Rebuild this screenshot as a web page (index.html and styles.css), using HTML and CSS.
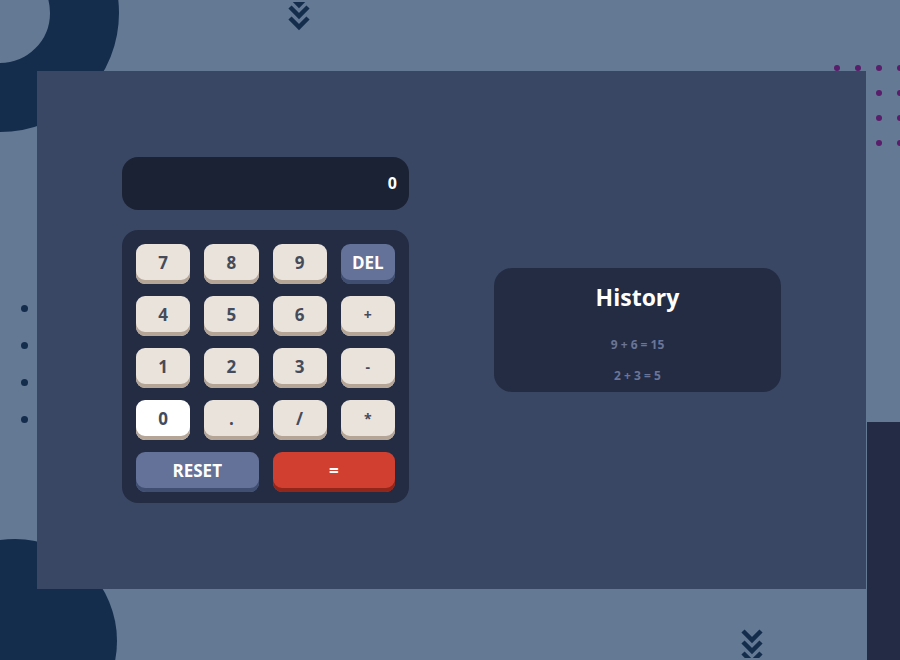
FILE: index.html
```html
<!DOCTYPE html>
<html>
<head>
<meta charset="utf-8">
<link rel="stylesheet" href="styles.css">
</head>
<body>
<div class="stage">
  <div class="ring-top"></div>
  <div class="circle-bottom"></div>
  <svg class="chev chev-top" width="24" height="30" viewBox="0 0 24 30">
    <path d="M3 -6 L12 3 L21 -6" />
    <path d="M3 5 L12 14 L21 5" />
    <path d="M3 16 L12 25 L21 16" />
  </svg>
  <svg class="chev chev-bottom" width="24" height="30" viewBox="0 0 24 30">
    <path d="M3 3 L12 12 L21 3" />
    <path d="M3 14 L12 23 L21 14" />
    <path d="M3 25 L12 34 L21 25" />
  </svg>
  <div class="dots-right">
    <span></span><span></span><span></span><span></span>
    <span></span><span></span><span></span><span></span>
    <span></span><span></span><span></span><span></span>
    <span></span><span></span><span></span><span></span>
  </div>
  <div class="dots-left">
    <span></span><span></span><span></span><span></span>
  </div>
  <div class="side-block"></div>

  <main class="panel">
    <section class="calc">
      <div class="display">0</div>
      <div class="keypad">
        <button class="key">7</button>
        <button class="key">8</button>
        <button class="key">9</button>
        <button class="key key-blue">DEL</button>
        <button class="key">4</button>
        <button class="key">5</button>
        <button class="key">6</button>
        <button class="key key-op">+</button>
        <button class="key">1</button>
        <button class="key">2</button>
        <button class="key">3</button>
        <button class="key key-op">-</button>
        <button class="key key-active">0</button>
        <button class="key">.</button>
        <button class="key">/</button>
        <button class="key key-op">*</button>
        <button class="key key-blue key-wide">RESET</button>
        <button class="key key-red key-wide">=</button>
      </div>
    </section>
    <section class="history">
      <h2 class="history-title">History</h2>
      <p class="history-item">9 + 6 = 15</p>
      <p class="history-item">2 + 3 = 5</p>
    </section>
  </main>
</div>
</body>
</html>
```
FILE: styles.css
```css
* { box-sizing: border-box; }
html, body { margin: 0; padding: 0; }
body {
  background: #647993;
  font-family: "Open Sans", "Liberation Sans", sans-serif;
  width: 900px;
  height: 660px;
  overflow: hidden;
}
.stage {
  position: relative;
  width: 900px;
  height: 660px;
  overflow: hidden;
  padding: 71px 0 0 37px;
}
.ring-top {
  position: absolute;
  left: -119px;
  top: -106px;
  width: 238px;
  height: 238px;
  border-radius: 50%;
  border: 69px solid #142d4c;
}
.circle-bottom {
  position: absolute;
  left: -87px;
  top: 539px;
  width: 204px;
  height: 204px;
  border-radius: 50%;
  background: #142d4c;
}
.chev { position: absolute; }
.chev path { fill: none; stroke: #142d4c; stroke-width: 4.5; }
.chev-top { left: 287px; top: 2px; }
.chev-bottom { left: 740px; top: 628px; }
.dots-right {
  position: absolute;
  left: 834px;
  top: 65px;
  display: grid;
  grid-template-columns: repeat(4, 6px);
  grid-auto-rows: 6px;
  column-gap: 15px;
  row-gap: 19px;
}
.dots-right span, .dots-left span {
  display: block;
  width: 6px;
  height: 6px;
  border-radius: 50%;
  background: #5a1d6b;
}
.dots-left {
  position: absolute;
  left: 21px;
  top: 305px;
  display: flex;
  flex-direction: column;
  gap: 30px;
}
.dots-left span { background: #142d4c; width: 7px; height: 7px; }
.side-block {
  position: absolute;
  left: 867px;
  top: 422px;
  width: 33px;
  height: 238px;
  background: #242b45;
}
.panel {
  position: relative;
  z-index: 1;
  width: 829px;
  height: 518px;
  background: #3a4764;
  display: flex;
  align-items: center;
  gap: 85px;
  padding: 0 85px;
}
.calc {
  width: 287px;
  display: flex;
  flex-direction: column;
  gap: 20px;
}
.display {
  height: 53px;
  border-radius: 16px;
  background: #1b2234;
  color: #ffffff;
  font-weight: 700;
  font-size: 16px;
  text-align: right;
  padding: 0 12px;
  line-height: 53px;
}
.keypad {
  background: #232c43;
  border-radius: 16px;
  padding: 14px 14px 11px;
  display: grid;
  grid-template-columns: repeat(4, 1fr);
  column-gap: 14px;
  row-gap: 12px;
}
.key {
  height: 40px;
  border: none;
  border-radius: 9px;
  background: #eae3dc;
  box-shadow: inset 0 -4px 0 #b4a597;
  color: #444b5a;
  font-family: "Open Sans", "Liberation Sans", sans-serif;
  font-weight: 700;
  font-size: 17px;
  padding: 0 0 4px;
  margin: 0;
}
.key-op { font-size: 14px; }
.key-active { background: #ffffff; box-shadow: inset 0 -4px 0 #b4a597; }
.key-blue {
  background: #647198;
  box-shadow: inset 0 -4px 0 #404e72;
  color: #ffffff;
}
.key-red {
  background: #d03f2f;
  box-shadow: inset 0 -4px 0 #93261a;
  color: #ffffff;
}
.key-wide { grid-column: span 2; }
.history {
  width: 287px;
  height: 124px;
  background: #232c43;
  border-radius: 18px;
  text-align: center;
  padding-top: 13px;
}
.history-title {
  margin: 0;
  color: #ffffff;
  font-family: "Open Sans", "Liberation Sans", sans-serif;
  font-weight: 700;
  font-size: 23px;
  line-height: 32px;
}
.history-item {
  margin: 0;
  color: #6a7597;
  font-weight: 700;
  font-size: 12px;
  line-height: 31px;
}
.history-title + .history-item { margin-top: 16px; }
```
